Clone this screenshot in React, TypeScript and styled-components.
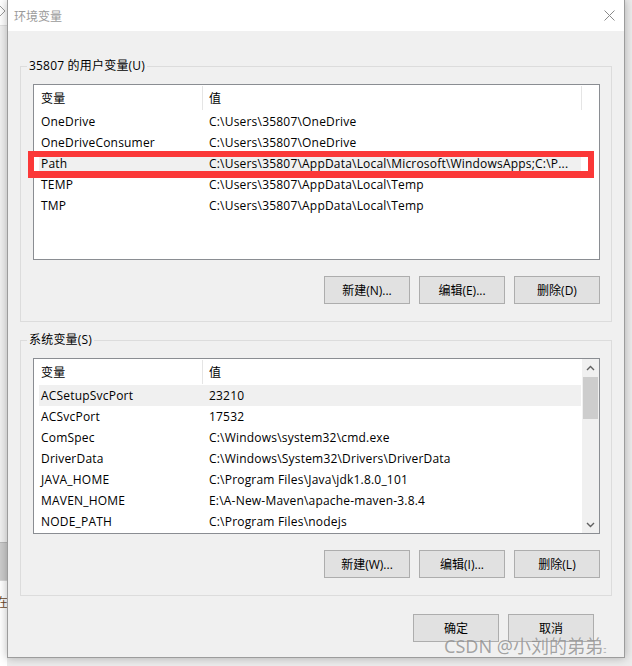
import React from 'react';
import styled, { createGlobalStyle } from 'styled-components';

const Global = createGlobalStyle`
  html, body { margin: 0; padding: 0; background: #ececec; }
  body {
    font-family: "Segoe UI", "Open Sans", "Noto Sans CJK SC", sans-serif;
    font-size: 12px;
    color: #000;
  }
  * { box-sizing: border-box; }
`;

const Screen = styled.div`
  display: flex;
  width: 632px;
  height: 666px;
  overflow: hidden;
  position: relative;
  background: #ececec;
`;

const BackStrip = styled.div`
  width: 7px;
  flex: none;
  display: flex;
  flex-direction: column;
  overflow: hidden;
  background: #fff;
`;

const BackSeg = styled.div<{ $h?: number; $bg: string; $line?: string }>`
  flex: ${(p) => (p.$h ? 'none' : '1')};
  height: ${(p) => (p.$h ? `${p.$h}px` : 'auto')};
  background: ${(p) => p.$bg};
  border-top: ${(p) => (p.$line ? `1px solid ${p.$line}` : 'none')};
  position: relative;
  overflow: hidden;
  display: flex;
  flex-direction: column;
`;

const BackGlyph = styled.span<{ $top: number }>`
  margin-top: ${(p) => p.$top}px;
  margin-left: -4px;
  font-family: "Noto Sans CJK SC", sans-serif;
  font-size: 12px;
  line-height: 12px;
  color: #6b4a2a;
  white-space: nowrap;
`;

const Dialog = styled.div`
  width: 618px;
  height: 658px;
  flex: none;
  border: 1px solid #9c9c9c;
  border-top: none;
  background: #f0f0f0;
  display: flex;
  flex-direction: column;
  box-shadow: 0 0 9px rgba(0, 0, 0, 0.28);
  position: relative;
  z-index: 1;
`;

const TitleBar = styled.div`
  height: 31px;
  flex: none;
  background: #fff;
  display: flex;
  align-items: center;
  justify-content: space-between;
  padding: 0 9px 0 6px;
`;

const TitleText = styled.span`
  font-family: "Noto Sans CJK SC", sans-serif;
  font-size: 12px;
  color: #9a9a9a;
`;

const Body = styled.div`
  flex: 1;
  display: flex;
  flex-direction: column;
  padding: 27px 12px 0 12px;
`;

const Group = styled.fieldset<{ $gap?: number }>`
  margin: ${(p) => p.$gap ?? 0}px 0 0 0;
  padding: 10px 11px 17px 12px;
  border: 1px solid #dcdcdc;
  min-width: 0;
  display: flex;
  flex-direction: column;
`;

const Legend = styled.legend`
  margin-left: -6px;
  padding: 0 2px;
  font-size: 12px;
  line-height: 16px;
  letter-spacing: 0.2px;
  color: #000;
`;

const ListBox = styled.div`
  height: 176px;
  border: 1px solid #8a8d92;
  background: #fff;
  display: flex;
  overflow: hidden;
  letter-spacing: 0.2px;
`;

const TableArea = styled.div`
  flex: 1;
  display: flex;
  flex-direction: column;
  min-width: 0;
`;

const HeaderRow = styled.div`
  height: 26px;
  flex: none;
  display: flex;
  align-items: stretch;
`;

const HeaderCell = styled.div<{ $w?: number; $sep?: boolean; $pl?: number }>`
  width: ${(p) => (p.$w ? `${p.$w}px` : 'auto')};
  flex: ${(p) => (p.$w ? 'none' : '1')};
  display: flex;
  align-items: center;
  padding-left: ${(p) => p.$pl ?? 0}px;
  position: relative;
  ${(p) =>
    p.$sep
      ? `&::before { content: ""; position: absolute; left: 0; top: 1px; bottom: 1px; width: 1px; background: #e5e5e5; }`
      : ''}
`;

const Row = styled.div<{ $sel?: boolean }>`
  height: 21px;
  flex: none;
  width: 542px;
  margin-left: 5px;
  display: flex;
  align-items: center;
  background: ${(p) => (p.$sel ? '#f0f0f0' : 'transparent')};
`;

const NameCell = styled.div`
  width: 163px;
  flex: none;
  padding-left: 2px;
  white-space: nowrap;
  overflow: hidden;
`;

const ValueCell = styled.div`
  flex: 1;
  padding-left: 7px;
  white-space: nowrap;
  overflow: hidden;
`;

const ScrollBar = styled.div`
  width: 17px;
  flex: none;
  background: #f0f0f0;
  display: flex;
  flex-direction: column;
`;

const ArrowBtn = styled.div`
  height: 17px;
  flex: none;
  display: flex;
  align-items: center;
  justify-content: center;
`;

const Thumb = styled.div`
  height: 42px;
  flex: none;
  margin: 1px 1px 0 1px;
  background: #cdcdcd;
`;

const Track = styled.div`
  flex: 1;
`;

const ButtonRow = styled.div<{ $pr?: number; $mt: number }>`
  display: flex;
  justify-content: flex-end;
  gap: 9px;
  margin-top: ${(p) => p.$mt}px;
  padding-right: ${(p) => p.$pr ?? 0}px;
`;

const Button = styled.button`
  width: 86px;
  height: 28px;
  border: 1px solid #adadad;
  background: #e1e1e1;
  font-family: "Segoe UI", "Open Sans", "Noto Sans CJK SC", sans-serif;
  font-size: 12px;
  color: #000;
  padding: 0;
  display: flex;
  align-items: center;
  justify-content: center;
`;

const RedMark = styled.div`
  position: absolute;
  left: 28px;
  top: 151px;
  width: 566px;
  height: 27px;
  border: 6px solid #fb3838;
  border-bottom-width: 7px;
  z-index: 3;
  pointer-events: none;
`;

const Watermark = styled.div`
  position: absolute;
  left: 444px;
  top: 635px;
  font-family: "Noto Sans", "Noto Sans CJK SC", sans-serif;
  font-size: 18px;
  line-height: 22px;
  color: rgba(105, 105, 105, 0.6);
  text-shadow: 0 0 1px rgba(255, 255, 255, 0.6);
  z-index: 4;
  white-space: nowrap;
`;

const Dots = styled.span`
  font-size: 9px;
  letter-spacing: -1px;
`;

type Item = [string, string];

const userVars: Item[] = [
  ['OneDrive', 'C:\\Users\\35807\\OneDrive'],
  ['OneDriveConsumer', 'C:\\Users\\35807\\OneDrive'],
  ['Path', 'C:\\Users\\35807\\AppData\\Local\\Microsoft\\WindowsApps;C:\\P...'],
  ['TEMP', 'C:\\Users\\35807\\AppData\\Local\\Temp'],
  ['TMP', 'C:\\Users\\35807\\AppData\\Local\\Temp'],
];

const sysVars: Item[] = [
  ['ACSetupSvcPort', '23210'],
  ['ACSvcPort', '17532'],
  ['ComSpec', 'C:\\Windows\\system32\\cmd.exe'],
  ['DriverData', 'C:\\Windows\\System32\\Drivers\\DriverData'],
  ['JAVA_HOME', 'C:\\Program Files\\Java\\jdk1.8.0_101'],
  ['MAVEN_HOME', 'E:\\A-New-Maven\\apache-maven-3.8.4'],
  ['NODE_PATH', 'C:\\Program Files\\nodejs'],
];

const Chevron = ({ up }: { up?: boolean }) => (
  <svg width="9" height="6" viewBox="0 0 9 6">
    <polyline
      points={up ? '1,5 4.5,1.5 8,5' : '1,1 4.5,4.5 8,1'}
      fill="none"
      stroke="#606060"
      strokeWidth="1.4"
    />
  </svg>
);

const CloseIcon = () => (
  <svg width="11" height="11" viewBox="0 0 11 11">
    <path d="M0.5 0.5 L10.5 10.5 M10.5 0.5 L0.5 10.5" stroke="#8a8a8a" strokeWidth="1" />
  </svg>
);

const VarList = ({ items, selected, scroll }: { items: Item[]; selected: number; scroll?: boolean }) => (
  <ListBox>
    <TableArea>
      <HeaderRow>
        <HeaderCell $w={168} $pl={7}>变量</HeaderCell>
        <HeaderCell $w={379} $pl={7} $sep>值</HeaderCell>
        {!scroll && <HeaderCell $sep />}
      </HeaderRow>
      {items.map(([n, v], i) => (
        <Row key={n} $sel={i === selected}>
          <NameCell>{n}</NameCell>
          <ValueCell>{v}</ValueCell>
        </Row>
      ))}
    </TableArea>
    {scroll && (
      <ScrollBar>
        <ArrowBtn>
          <Chevron up />
        </ArrowBtn>
        <Thumb />
        <Track />
        <ArrowBtn>
          <Chevron />
        </ArrowBtn>
      </ScrollBar>
    )}
  </ListBox>
);

export default function App() {
  return (
    <>
      <Global />
      <Screen>
        <BackStrip>
          <BackSeg $h={25} $bg="#ffffff">
            <svg width="7" height="25" viewBox="0 0 7 25">
              <path d="M0 6 L5 11 L0 16" fill="none" stroke="#9a9a9a" strokeWidth="1" />
            </svg>
          </BackSeg>
          <BackSeg $h={517} $bg="#f0f0f0" $line="#e0e0e0" />
          <BackSeg $h={38} $bg="#cccccc" $line="#b8b8b8" />
          <BackSeg $bg="#ffffff" $line="#d8d8d8">
            <BackGlyph $top={15}>在</BackGlyph>
          </BackSeg>
        </BackStrip>

        <Dialog>
          <TitleBar>
            <TitleText>环境变量</TitleText>
            <CloseIcon />
          </TitleBar>
          <Body>
            <Group>
              <Legend>35807 的用户变量(U)</Legend>
              <VarList items={userVars} selected={2} />
              <ButtonRow $mt={16}>
                <Button>新建(N)...</Button>
                <Button>编辑(E)...</Button>
                <Button>删除(D)</Button>
              </ButtonRow>
            </Group>

            <Group $gap={10}>
              <Legend>系统变量(S)</Legend>
              <VarList items={sysVars} selected={0} scroll />
              <ButtonRow $mt={16}>
                <Button>新建(W)...</Button>
                <Button>编辑(I)...</Button>
                <Button>删除(L)</Button>
              </ButtonRow>
            </Group>

            <ButtonRow $mt={18} $pr={18}>
              <Button>确定</Button>
              <Button>取消</Button>
            </ButtonRow>
          </Body>
        </Dialog>

        <RedMark />
        <Watermark>
          CSDN @小刘的弟弟<Dots>::</Dots>
        </Watermark>
      </Screen>
    </>
  );
}
